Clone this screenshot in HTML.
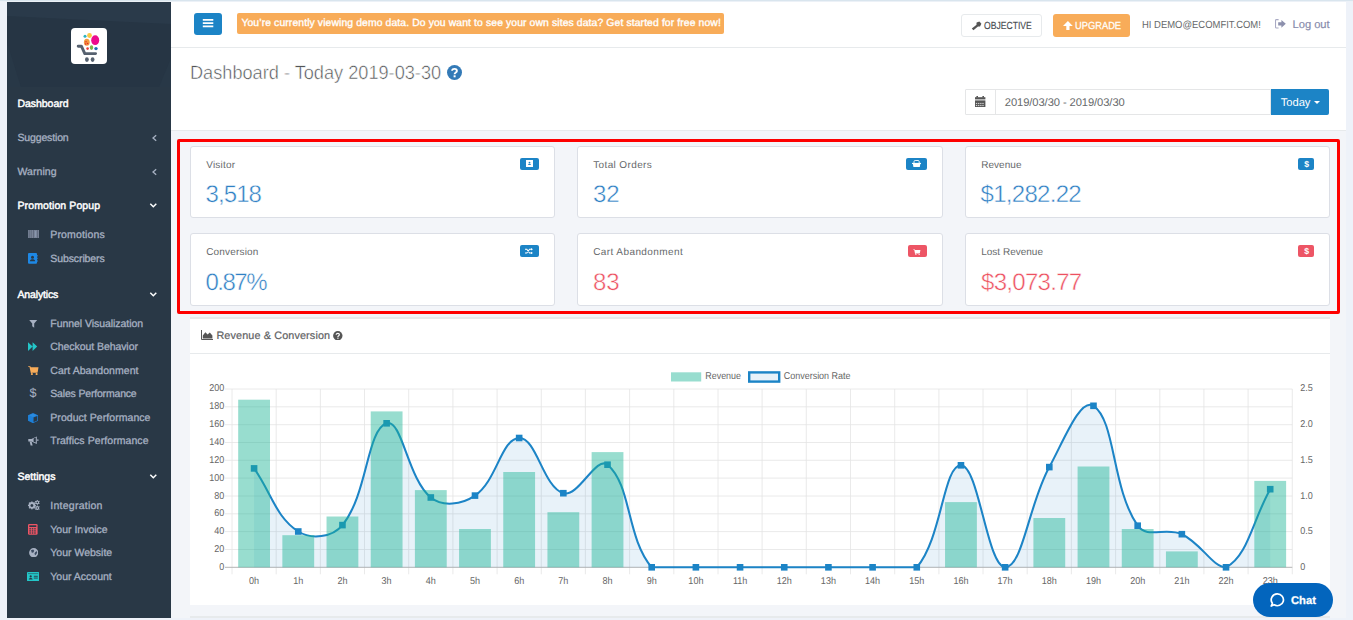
<!DOCTYPE html>
<html>
<head>
<meta charset="utf-8">
<title>Dashboard</title>
<style>
*{box-sizing:border-box;margin:0;padding:0}
html,body{width:1353px;height:620px;overflow:hidden}
body{text-rendering:geometricPrecision;font-family:"Liberation Sans",sans-serif;background:#eef2f9;position:relative;color:#676a6c;font-size:10.5px}
.abs{position:absolute}
#topstrip{left:0;top:0;width:1353px;height:2px;background:linear-gradient(#d9e5ee 0,#d9e5ee 50%,#ecf1f7 50%,#ecf1f7 100%)}
#side{left:7px;top:2px;width:164px;height:616px;background:#293846}
#sidehead{left:0;top:0;width:164px;height:85px;background:#2a3a4a;overflow:hidden}
#logo{left:64px;top:26px;width:36px;height:36px;background:#fff;border-radius:4px}
.nav,.sub{position:absolute;margin-top:1px;white-space:nowrap;font-size:10.5px;color:#a7b1c2;line-height:14px;-webkit-text-stroke:0.3px #a7b1c2}
.nav{left:10.5px}
.sub{left:43.3px}
.nav.on{color:#fff;-webkit-text-stroke:0.45px #fff}
.ico{position:absolute}
.chev{position:absolute;left:143px;width:8px;height:8px}
#main{left:171px;top:2px;width:1175px;height:616px;background:#f3f5f9}
#topbar{left:0;top:0;width:1175px;height:46px;background:#fff;border-bottom:1px solid #e7eaec}
#heading{left:0;top:46px;width:1175px;height:83px;background:#fff;border-bottom:1px solid #e7eaec}
.card{position:absolute;background:#fff;border:1px solid #dcdfe6;border-radius:3px}
.card .lbl{position:absolute;left:15.2px;top:12.1px;font-size:10px;color:#676a6c;white-space:nowrap;line-height:14px}
.card .val{position:absolute;left:14.5px;top:33.7px;font-size:24px;white-space:nowrap;line-height:28px;color:#2f80c4;letter-spacing:-0.9px;-webkit-text-stroke:0.45px #fff}
.card .val.red{color:#ed5060}
.badge{position:absolute;top:11px;height:12px;border-radius:2px;background:#1c84c6}
.badge.red{background:#ed5565}
.ct{text-rendering:geometricPrecision;font-family:"Liberation Sans",sans-serif;font-size:9.9px;fill:#666}
.t{position:absolute;white-space:nowrap}
</style>
</head>
<body>
<div class="abs" id="topstrip"></div>

<!-- SIDEBAR -->
<div class="abs" id="side">
  <div class="abs" id="sidehead">
    <svg class="abs" style="left:0;top:0" width="164" height="85" viewBox="0 0 164 85">
      <polygon points="0,14 60,17 164,22 164,85 0,85" fill="#263544"/>
      <polygon points="0,40 14,85 0,85" fill="#283847"/>
      <polygon points="164,56 152,85 164,85" fill="#283847"/>
    </svg>
    <div class="abs" id="logo">
      <svg width="36" height="36" viewBox="0 0 36 36">
        <circle cx="18.5" cy="7.5" r="2.4" fill="#f6c844"/>
        <circle cx="14" cy="8.3" r="1.5" fill="#2bb3c0"/>
        <ellipse cx="24.2" cy="12.2" rx="4" ry="4.9" fill="#ec0b8c"/>
        <ellipse cx="15.8" cy="14.2" rx="2.9" ry="3.5" fill="#f29a3f"/>
        <circle cx="15" cy="13.8" r="0.75" fill="#e8232a"/><circle cx="16.6" cy="15.6" r="0.75" fill="#e8232a"/><circle cx="14.6" cy="16" r="0.75" fill="#e8232a"/>
        <ellipse cx="20.5" cy="19.6" rx="1.7" ry="2.3" fill="#7ab648"/>
        <circle cx="16.6" cy="20.6" r="1.3" fill="#e9413d"/>
        <circle cx="25" cy="20.6" r="1.7" fill="#1f6fb5"/>
        <path d="M7.2,18.2 H10.4 L13.8,25.6 H24.6" fill="none" stroke="#56616f" stroke-width="2.9" stroke-linecap="round" stroke-linejoin="round"/>
        <ellipse cx="15.9" cy="31.6" rx="1.9" ry="2.3" fill="#56616f"/><ellipse cx="21.6" cy="31.6" rx="1.9" ry="2.3" fill="#56616f"/>
      </svg>
    </div>
  </div>
  <div class="nav on" style="top:94px;letter-spacing:-0.05px">Dashboard</div>
  <div class="nav" style="top:128px;letter-spacing:-0.15px">Suggestion</div>
  <div class="nav" style="top:162px;letter-spacing:0.05px">Warning</div>
  <div class="nav on" style="top:196px;letter-spacing:0.1px">Promotion Popup</div>
  <div class="sub" style="top:225px;letter-spacing:0.15px">Promotions</div>
  <div class="sub" style="top:249px;letter-spacing:-0.1px">Subscribers</div>
  <div class="nav on" style="top:285px;letter-spacing:-0.15px">Analytics</div>
  <div class="sub" style="top:314px;letter-spacing:-0.05px">Funnel Visualization</div>
  <div class="sub" style="top:337px;letter-spacing:-0.07px">Checkout Behavior</div>
  <div class="sub" style="top:361px;letter-spacing:0.04px">Cart Abandonment</div>
  <div class="sub" style="top:384px;letter-spacing:-0.18px">Sales Performance</div>
  <div class="sub" style="top:408px;letter-spacing:0.05px">Product Performance</div>
  <div class="sub" style="top:431px;letter-spacing:0.07px">Traffics Performance</div>
  <div class="nav on" style="top:467px">Settings</div>
  <div class="sub" style="top:496px;letter-spacing:0.25px">Integration</div>
  <div class="sub" style="top:520px">Your Invoice</div>
  <div class="sub" style="top:543px">Your Website</div>
  <div class="sub" style="top:567px;letter-spacing:0px">Your Account</div>
  
</div>

<!-- MAIN -->
<div class="abs" id="main">
  <div class="abs" id="topbar"></div>
  <div class="abs" id="heading"></div>
</div>

<!-- TOPBAR CONTENT (page coords) -->
<div class="abs" style="left:194px;top:13px;width:28px;height:22px;background:#1c84c6;border-radius:3px">
  <svg class="abs" style="left:0;top:0" width="28" height="22" viewBox="0 0 28 22"><path d="M8.8,6.9H19.3M8.8,10.1H19.3M8.8,13.3H19.3" stroke="#fff" stroke-width="1.7"/></svg>
</div>
<div class="abs" style="left:237px;top:13px;width:487px;height:21px;background:#f8ac59;border-radius:2px"></div>
<div class="t" style="left:241.4px;top:16.5px;font-size:10.4px;line-height:14px;color:#fff;letter-spacing:0.103px;-webkit-text-stroke:0.35px #fff">You’re currently viewing demo data. Do you want to see your own sites data? Get started for free now!</div>

<div class="abs" style="left:961px;top:14px;width:81px;height:23px;background:#fff;border:1px solid #e7eaec;border-radius:3px"></div>
<div class="t" style="left:984.2px;top:19.6px;font-size:10.3px;line-height:13px;color:#484c50;-webkit-text-stroke:0.15px #484c50;transform-origin:0 0;transform:scaleX(0.835)">OBJECTIVE</div>
<div class="abs" style="left:1053px;top:14px;width:77px;height:23px;background:#f8ac59;border-radius:3px"></div>
<div class="t" style="left:1074.6px;top:19.6px;font-size:10.3px;line-height:13px;color:#fff;-webkit-text-stroke:0.25px #fff;transform-origin:0 0;transform:scaleX(0.905)">UPGRADE</div>
<div class="t" style="left:1142.3px;top:18.7px;font-size:10.3px;line-height:13px;color:#676a6c;transform-origin:0 0;transform:scaleX(0.918)">HI DEMO@ECOMFIT.COM!</div>
<div class="t" style="left:1292.6px;top:17.9px;font-size:11.2px;line-height:14px;color:#878bab;letter-spacing:-0.05px;-webkit-text-stroke:0.15px #878bab">Log out</div>
<svg class="abs" style="left:970.5px;top:20.5px" width="11" height="10" viewBox="0 0 11 10"><path d="M0.8,7.6 L6.2,3.2 L7.6,5 L2.4,9.2 Z" fill="#555"/><path d="M5.6,1.4 L8.4,0.4 L10.4,2.8 L9,5.4 L7.4,5.6 L5.4,3.2 Z" fill="#555"/></svg>
<svg class="abs" style="left:1062.5px;top:21px" width="10" height="9.4" viewBox="0 0 10 9.4"><path d="M4.9,0 L9.8,4.9 H6.5 V9.2 H3.3 V4.9 H0 Z" fill="#fff"/></svg>
<svg class="abs" style="left:1275px;top:19.4px" width="12" height="10" viewBox="0 0 12 10"><path d="M3.6,0.6 H1.4 Q0.5,0.6 0.5,1.5 V8.1 Q0.5,9 1.4,9 H3.6" fill="none" stroke="#a9aac4" stroke-width="1.1"/><path d="M3.2,3.2 H6.4 V0.9 L10.8,4.8 L6.4,8.7 V6.4 H3.2 Z" fill="#8c90ad"/></svg>
<svg class="abs" style="left:151px;top:134px" width="7" height="8" viewBox="0 0 7 8"><path d="M5.2,1.2 L2,4 L5.2,6.8" fill="none" stroke="#a7b1c2" stroke-width="1.3"/></svg>
<svg class="abs" style="left:151px;top:168px" width="7" height="8" viewBox="0 0 7 8"><path d="M5.2,1.2 L2,4 L5.2,6.8" fill="none" stroke="#a7b1c2" stroke-width="1.3"/></svg>
<svg class="abs" style="left:149px;top:202.4px" width="9" height="7" viewBox="0 0 9 7"><path d="M1.3,1.8 L4.3,4.8 L7.3,1.8" fill="none" stroke="#fff" stroke-width="1.5"/></svg>
<svg class="abs" style="left:149px;top:291.4px" width="9" height="7" viewBox="0 0 9 7"><path d="M1.3,1.8 L4.3,4.8 L7.3,1.8" fill="none" stroke="#fff" stroke-width="1.5"/></svg>
<svg class="abs" style="left:149px;top:473.4px" width="9" height="7" viewBox="0 0 9 7"><path d="M1.3,1.8 L4.3,4.8 L7.3,1.8" fill="none" stroke="#fff" stroke-width="1.5"/></svg>
<svg class="abs" style="left:28px;top:230px" width="11" height="8" viewBox="0 0 11 8"><rect width="11" height="8" fill="#7a8598"/><path d="M1.2,0V8M3.2,0V8M5.5,0V8M9.6,0V8" stroke="#5a6578" stroke-width="0.8"/><path d="M7.6,1.5V6.5" stroke="#9fb0d0" stroke-width="0.9" stroke-dasharray="1,1"/></svg>
<svg class="abs" style="left:28px;top:253px" width="10" height="11" viewBox="0 0 10 11"><rect x="0" y="0" width="9" height="10.8" rx="1" fill="#1e88e5"/><rect x="8.6" y="2" width="1" height="1.6" fill="#1e88e5"/><rect x="8.6" y="4.6" width="1" height="1.6" fill="#1e88e5"/><rect x="8.6" y="7.2" width="1" height="1.6" fill="#1e88e5"/><circle cx="4.5" cy="4.2" r="1.5" fill="#293846"/><path d="M1.9,8.2 C1.9,5.6 7.1,5.6 7.1,8.2 Z" fill="#293846"/></svg>
<svg class="abs" style="left:29px;top:320px" width="9" height="8" viewBox="0 0 9 8"><path d="M0.2,0 H8.2 L5.2,3.5 V7.8 L3.2,6.3 V3.5 Z" fill="#a7b1c2"/></svg>
<svg class="abs" style="left:27.8px;top:341.8px" width="10" height="10" viewBox="0 0 10 10"><path d="M0,0.2 L4.6,4.6 L0,9 Z M4.6,0.2 L9.2,4.6 L4.6,9 Z" fill="#23c6c8"/></svg>
<svg class="abs" style="left:28px;top:366px" width="11" height="9" viewBox="0 0 11 9"><path d="M0.2,0.3 H2.3 L2.8,1.3 H10.5 L9.7,5.9 H3.7 L3.8,6.3 H9.6 V7.1 H2.8 L1.5,1.1 H0.2 Z" fill="#f8ac59"/><circle cx="3.9" cy="8" r="1.05" fill="#f8ac59"/><circle cx="8.6" cy="8" r="1.05" fill="#f8ac59"/></svg>
<div class="t" style="left:29.6px;top:385.6px;font-size:12.6px;line-height:15px;color:#a7b1c2">$</div>
<svg class="abs" style="left:28px;top:412.6px" width="10" height="10.4" viewBox="0 0 10 10.4"><path d="M5,0 L10,2.2 V7.8 L5,10.2 L0,7.8 V2.2 Z" fill="#1e7fd6"/><path d="M5.3,4.6 L9.3,2.9 V7.4 L5.3,9.3 Z" fill="#293846"/><path d="M0.9,2.3 L5,0.7 L9.1,2.3 L5,4 Z" fill="#2a8be0"/><path d="M5,4.2V10" stroke="#1e7fd6" stroke-width="0.7"/></svg>
<svg class="abs" style="left:28px;top:435.6px" width="11" height="10" viewBox="0 0 11 10"><path d="M0.3,3 H3.4 L8.8,0.4 V8 L3.4,5.6 H0.3 Z" fill="#a7b1c2"/><path d="M5.6,2.6 L7.8,1.6 V6.6 L5.6,5.7 Z" fill="#293846"/><path d="M1.6,5.6 H3.6 L4.6,9.4 H2.6 Z" fill="#a7b1c2"/><rect x="9.3" y="3.3" width="1.1" height="1.7" fill="#a7b1c2"/></svg>
<svg class="abs" style="left:27.6px;top:500px" width="12" height="10.4" viewBox="0 0 12 10.4"><circle cx="3.9" cy="5.4" r="2.40" fill="none" stroke="#a7b1c2" stroke-width="1.80"/><rect x="3.30" y="1.40" width="1.2" height="1.4" fill="#a7b1c2" transform="rotate(0.0 3.9 5.4)"/><rect x="3.30" y="1.40" width="1.2" height="1.4" fill="#a7b1c2" transform="rotate(45.0 3.9 5.4)"/><rect x="3.30" y="1.40" width="1.2" height="1.4" fill="#a7b1c2" transform="rotate(90.0 3.9 5.4)"/><rect x="3.30" y="1.40" width="1.2" height="1.4" fill="#a7b1c2" transform="rotate(135.0 3.9 5.4)"/><rect x="3.30" y="1.40" width="1.2" height="1.4" fill="#a7b1c2" transform="rotate(180.0 3.9 5.4)"/><rect x="3.30" y="1.40" width="1.2" height="1.4" fill="#a7b1c2" transform="rotate(225.0 3.9 5.4)"/><rect x="3.30" y="1.40" width="1.2" height="1.4" fill="#a7b1c2" transform="rotate(270.0 3.9 5.4)"/><rect x="3.30" y="1.40" width="1.2" height="1.4" fill="#a7b1c2" transform="rotate(315.0 3.9 5.4)"/><circle cx="9.3" cy="2.4" r="1.35" fill="none" stroke="#a7b1c2" stroke-width="1.10"/><rect x="8.90" y="-0.20" width="0.8" height="1.4" fill="#a7b1c2" transform="rotate(0.0 9.3 2.4)"/><rect x="8.90" y="-0.20" width="0.8" height="1.4" fill="#a7b1c2" transform="rotate(60.0 9.3 2.4)"/><rect x="8.90" y="-0.20" width="0.8" height="1.4" fill="#a7b1c2" transform="rotate(120.0 9.3 2.4)"/><rect x="8.90" y="-0.20" width="0.8" height="1.4" fill="#a7b1c2" transform="rotate(180.0 9.3 2.4)"/><rect x="8.90" y="-0.20" width="0.8" height="1.4" fill="#a7b1c2" transform="rotate(240.0 9.3 2.4)"/><rect x="8.90" y="-0.20" width="0.8" height="1.4" fill="#a7b1c2" transform="rotate(300.0 9.3 2.4)"/><circle cx="9.3" cy="8" r="1.35" fill="none" stroke="#a7b1c2" stroke-width="1.10"/><rect x="8.90" y="5.40" width="0.8" height="1.4" fill="#a7b1c2" transform="rotate(0.0 9.3 8)"/><rect x="8.90" y="5.40" width="0.8" height="1.4" fill="#a7b1c2" transform="rotate(60.0 9.3 8)"/><rect x="8.90" y="5.40" width="0.8" height="1.4" fill="#a7b1c2" transform="rotate(120.0 9.3 8)"/><rect x="8.90" y="5.40" width="0.8" height="1.4" fill="#a7b1c2" transform="rotate(180.0 9.3 8)"/><rect x="8.90" y="5.40" width="0.8" height="1.4" fill="#a7b1c2" transform="rotate(240.0 9.3 8)"/><rect x="8.90" y="5.40" width="0.8" height="1.4" fill="#a7b1c2" transform="rotate(300.0 9.3 8)"/></svg>
<svg class="abs" style="left:28.4px;top:523.8px" width="10" height="11" viewBox="0 0 10 11"><rect width="9.6" height="10.8" rx="1.2" fill="#ed5565"/><rect x="1.3" y="1.3" width="7" height="1.7" fill="#293846"/><rect x="1.4" y="4.2" width="1.5" height="1.2" fill="#293846"/><rect x="3.8" y="4.2" width="1.5" height="1.2" fill="#293846"/><rect x="6.2" y="4.2" width="1.5" height="1.2" fill="#293846"/><rect x="1.4" y="6.3" width="1.5" height="1.2" fill="#293846"/><rect x="3.8" y="6.3" width="1.5" height="1.2" fill="#293846"/><rect x="6.2" y="6.3" width="1.5" height="1.2" fill="#293846"/><rect x="1.4" y="8.4" width="1.5" height="1.2" fill="#293846"/><rect x="3.8" y="8.4" width="1.5" height="1.2" fill="#293846"/><rect x="6.2" y="8.4" width="1.5" height="1.2" fill="#293846"/></svg>
<svg class="abs" style="left:28.8px;top:547.6px" width="9.4" height="9.4" viewBox="0 0 9.4 9.4"><circle cx="4.7" cy="4.7" r="4.6" fill="#a7b1c2"/><path d="M2,2.2 L4.2,1.4 L5.2,2.8 L4.4,4.6 L2.8,4.8 Z M6,4.4 L7.6,3 L8.2,4.8 L6.6,7.2 L5.4,6 Z" fill="#3a4a60"/></svg>
<svg class="abs" style="left:27px;top:571.8px" width="12.2" height="9.4" viewBox="0 0 12.2 9.4"><rect width="12.2" height="9.2" rx="0.8" fill="#23c6c8"/><rect x="1" y="1.2" width="10.2" height="0.9" fill="#293846" opacity="0.55"/><circle cx="3.7" cy="4.4" r="1.1" fill="#293846"/><path d="M1.8,7.4 C1.8,5.4 5.6,5.4 5.6,7.4 Z" fill="#293846"/><rect x="6.8" y="3.8" width="4" height="0.9" fill="#293846"/><rect x="6.8" y="5.6" width="4" height="0.9" fill="#293846"/></svg>

<!-- HEADING -->
<div class="t" style="left:190.2px;top:61.6px;font-size:19.3px;line-height:24px;color:#525557;transform-origin:0 0;transform:scaleX(0.942);-webkit-text-stroke:0.5px #fff">Dashboard - Today 2019-03-30</div>
<svg class="abs" style="left:447px;top:65px" width="15" height="15" viewBox="0 0 15 15"><circle cx="7.5" cy="7.5" r="7.5" fill="#337ab7"/><path d="M5.1,5.7 C5.1,3.2 9.9,3.2 9.9,5.9 C9.9,7.6 7.6,7.4 7.6,9.2" fill="none" stroke="#fff" stroke-width="1.9"/><rect x="6.6" y="10.3" width="2" height="2" fill="#fff"/></svg>

<div class="abs" style="left:965px;top:89px;width:306px;height:26px;background:#fff;border:1px solid #e5e6e7;border-radius:1px 0 0 1px"></div>
<div class="abs" style="left:995px;top:89px;width:1px;height:26px;background:#e5e6e7"></div>
<div class="t" style="left:1004.8px;top:96.3px;font-size:11.2px;line-height:14px;color:#676a6c;letter-spacing:-0.09px">2019/03/30 - 2019/03/30</div>
<div class="abs" style="left:1271px;top:89px;width:58px;height:26px;background:#1c84c6;border-radius:0 2px 2px 0"></div>
<div class="t" style="left:1280.8px;top:96.1px;font-size:11.2px;line-height:14px;color:#fff;letter-spacing:-0.05px">Today</div>
<div class="abs" style="left:1314px;top:101px;width:0;height:0;border-left:3px solid transparent;border-right:3px solid transparent;border-top:3px solid #fff"></div>
<svg class="abs" style="left:975px;top:96px" width="10.6" height="11" viewBox="0 0 10.6 11"><rect x="0" y="1.2" width="10.4" height="2.2" fill="#555"/><rect x="1.4" y="0" width="1.6" height="1.6" fill="#555"/><rect x="7.4" y="0" width="1.6" height="1.6" fill="#555"/><rect x="0" y="4.4" width="10.4" height="6.6" fill="#555"/><rect x="0.90" y="6.90" width="1.3" height="1.15" fill="#fff" opacity="0.75"/><rect x="3.05" y="6.90" width="1.3" height="1.15" fill="#fff" opacity="0.75"/><rect x="5.20" y="6.90" width="1.3" height="1.15" fill="#fff" opacity="0.75"/><rect x="7.35" y="6.90" width="1.3" height="1.15" fill="#fff" opacity="0.75"/><rect x="0.90" y="8.95" width="1.3" height="1.15" fill="#fff" opacity="0.75"/><rect x="3.05" y="8.95" width="1.3" height="1.15" fill="#fff" opacity="0.75"/><rect x="5.20" y="8.95" width="1.3" height="1.15" fill="#fff" opacity="0.75"/><rect x="7.35" y="8.95" width="1.3" height="1.15" fill="#fff" opacity="0.75"/></svg>

<!-- CARDS -->
<div class="abs" id="redbox" style="left:177px;top:139px;width:1163px;height:175px;border:3px solid #fe0000;border-radius:2px"></div>
<div class="card" style="left:190px;top:146px;width:365px;height:72px"><div class="lbl" style="letter-spacing:0.23px">Visitor</div><div class="val">3,518</div></div>
<div class="card" style="left:577px;top:146px;width:366px;height:72px"><div class="lbl" style="letter-spacing:0.38px">Total Orders</div><div class="val" style="letter-spacing:-0.1px;left:15px">32</div></div>
<div class="card" style="left:965px;top:146px;width:365px;height:72px"><div class="lbl" style="letter-spacing:0.04px">Revenue</div><div class="val" style="letter-spacing:-0.7px">$1,282.22</div></div>
<div class="card" style="left:190px;top:233px;width:365px;height:73px"><div class="lbl" style="letter-spacing:0.18px">Conversion</div><div class="val" style="top:34.7px;letter-spacing:-1.5px">0.87%</div></div>
<div class="card" style="left:577px;top:233px;width:366px;height:73px"><div class="lbl" style="letter-spacing:0.41px">Cart Abandonment</div><div class="val red" style="top:34.7px;letter-spacing:-0.1px;left:15px">83</div></div>
<div class="card" style="left:965px;top:233px;width:365px;height:73px"><div class="lbl" style="letter-spacing:0.01px">Lost Revenue</div><div class="val red" style="top:34.7px;letter-spacing:-0.7px;left:15px">$3,073.77</div></div>
<div class="abs" style="left:520px;top:158px;width:19px;height:12px;border-radius:2px;background:#1c84c6"></div>
<svg class="abs" style="left:526px;top:160px" width="7.4" height="7" viewBox="0 0 7.4 7"><rect width="7" height="7" fill="#fff"/><circle cx="3.5" cy="2.7" r="0.9" fill="#1c84c6"/><path d="M1.9,5.1 C1.9,3.6 5.1,3.6 5.1,5.1 Z" fill="#1c84c6"/></svg>
<div class="abs" style="left:906px;top:158px;width:21px;height:12px;border-radius:2px;background:#1c84c6"></div>
<svg class="abs" style="left:911.8px;top:160px" width="9.4" height="7.2" viewBox="0 0 9.4 7.2"><path d="M2,3 V1.6 Q2,0.5 3.1,0.5 H6.1 Q7.2,0.5 7.2,1.6 V3" fill="none" stroke="#fff" stroke-width="0.9"/><rect x="0" y="2.9" width="9.2" height="1.1" fill="#fff"/><path d="M0.9,4 H8.3 L7.8,7 H1.4 Z" fill="#fff"/></svg>
<div class="abs" style="left:1298px;top:158px;width:16px;height:12px;border-radius:2px;background:#1c84c6"></div>
<div class="t" style="left:1304.2px;top:158.2px;font-size:8.6px;line-height:12px;font-weight:bold;color:#fff">$</div>
<div class="abs" style="left:520px;top:245px;width:19px;height:12px;border-radius:2px;background:#1c84c6"></div>
<svg class="abs" style="left:525.4px;top:248px" width="8.2" height="6.4" viewBox="0 0 8.2 6.4"><path d="M0,1.2 H1.8 L4.6,5 H6.4 M0,5 H1.8 L4.6,1.2 H6.4" fill="none" stroke="#fff" stroke-width="1.05"/><path d="M6,0 L8,1.2 L6,2.4 Z M6,3.8 L8,5 L6,6.2 Z" fill="#fff"/></svg>
<div class="abs" style="left:908px;top:245px;width:19px;height:12px;border-radius:2px;background:#ed5565"></div>
<svg class="abs" style="left:913.0px;top:248.6px" width="8.0" height="6.3" viewBox="0 0 8.4 7"><path d="M0,0.4 H1.5 L1.9,1.2 H8 L7.4,4.4 H2.6 L2.8,5 H7.2 V5.5 H2.1 L1.1,0.9 H0 Z" fill="#fff"/><circle cx="3" cy="6.2" r="0.7" fill="#fff"/><circle cx="6.6" cy="6.2" r="0.7" fill="#fff"/></svg>
<div class="abs" style="left:1298px;top:245px;width:16px;height:12px;border-radius:2px;background:#ed5565"></div>
<div class="t" style="left:1304.2px;top:245.2px;font-size:8.6px;line-height:12px;font-weight:bold;color:#fff">$</div>

<!-- CHART PANEL -->
<div class="abs" id="panel" style="left:190px;top:317px;width:1140px;height:288px;background:#fff;border-top:2px solid #e7eaec"></div>
<div class="abs" style="left:190px;top:353px;width:1140px;height:1px;background:#e7eaec"></div>
<div class="abs" style="left:190px;top:616px;width:1140px;height:2px;background:#e7eaec"></div>
<div class="t" style="left:216.4px;top:328.8px;font-size:10.8px;line-height:14px;color:#5e6163;letter-spacing:0.14px;-webkit-text-stroke:0.2px #5e6163">Revenue &amp; Conversion</div>
<svg class="abs" style="left:201px;top:330px" width="12.4" height="10" viewBox="0 0 12.4 10"><path d="M0.5,0 V9.5 H12.4" fill="none" stroke="#555" stroke-width="1"/><path d="M1.8,8.4 V5.6 L4.4,2.2 L6.6,4.6 L8.8,2.6 L11.4,5.4 V8.4 Z" fill="#555"/></svg>
<svg class="abs" style="left:333px;top:330.5px" width="9.6" height="9.6" viewBox="0 0 9.6 9.6"><circle cx="4.8" cy="4.8" r="4.7" fill="#555"/><path d="M3.2,3.7 C3.2,2 6.4,2 6.4,3.8 C6.4,4.9 4.9,4.8 4.9,5.9" fill="none" stroke="#fff" stroke-width="1.2"/><rect x="4.3" y="6.6" width="1.2" height="1.2" fill="#fff"/></svg>
<svg class="abs" style="left:0;top:0" width="1353" height="620" viewBox="0 0 1353 620">
<path d="M225.0,549.5H1292.3 M225.0,531.6H1292.3 M225.0,513.8H1292.3 M225.0,496.0H1292.3 M225.0,478.1H1292.3 M225.0,460.3H1292.3 M225.0,442.5H1292.3 M225.0,424.7H1292.3 M225.0,406.8H1292.3 M225.0,389.0H1292.3 M232.0,389.0V574.3 M276.2,389.0V574.3 M320.4,389.0V574.3 M364.5,389.0V574.3 M408.7,389.0V574.3 M452.9,389.0V574.3 M497.1,389.0V574.3 M541.3,389.0V574.3 M585.4,389.0V574.3 M629.6,389.0V574.3 M673.8,389.0V574.3 M718.0,389.0V574.3 M762.1,389.0V574.3 M806.3,389.0V574.3 M850.5,389.0V574.3 M894.7,389.0V574.3 M938.9,389.0V574.3 M983.0,389.0V574.3 M1027.2,389.0V574.3 M1071.4,389.0V574.3 M1115.6,389.0V574.3 M1159.8,389.0V574.3 M1203.9,389.0V574.3 M1248.1,389.0V574.3 M1292.3,389.0V574.3" stroke="#e5e5e5" stroke-width="0.8" fill="none"/>
<path d="M225.0,567.3H1292.3" stroke="#b5b5b5" stroke-width="1" fill="none"/>
<path d="M254.09,468.40 C271.76,493.64 275.89,517.14 298.27,531.50 C311.24,539.82 332.31,537.52 342.45,525.10 C367.65,494.24 366.75,429.51 386.63,423.30 C402.09,418.47 407.43,478.37 430.81,497.50 C442.78,507.29 461.61,504.61 474.99,495.60 C496.95,480.81 501.26,438.49 519.16,438.00 C536.60,437.53 543.07,487.07 563.34,493.20 C578.42,497.75 596.21,455.21 607.52,464.70 C631.56,484.85 626.38,537.89 651.70,567.30 C661.72,567.30 678.21,567.30 695.88,567.30 C713.55,567.30 722.39,567.30 740.06,567.30 C757.73,567.30 766.57,567.30 784.24,567.30 C801.91,567.30 810.75,567.30 828.42,567.30 C846.09,567.30 854.93,567.30 872.60,567.30 C890.27,567.30 906.73,567.30 916.78,567.30 C942.07,538.10 943.28,465.30 960.96,465.30 C978.63,465.30 987.33,566.94 1005.14,567.30 C1022.67,567.30 1028.40,505.32 1049.31,467.10 C1063.74,440.72 1080.36,397.09 1093.49,405.80 C1115.70,420.53 1111.53,487.71 1137.67,525.70 C1146.88,539.07 1165.98,526.73 1181.85,534.20 C1201.33,543.37 1212.57,567.30 1226.03,567.30 C1247.91,556.16 1252.54,520.44 1270.21,489.20 L1270.21,567.30 L254.09,567.30 Z" fill="rgba(28,132,198,0.1)" stroke="none"/>
<path d="M254.09,468.40 C271.76,493.64 275.89,517.14 298.27,531.50 C311.24,539.82 332.31,537.52 342.45,525.10 C367.65,494.24 366.75,429.51 386.63,423.30 C402.09,418.47 407.43,478.37 430.81,497.50 C442.78,507.29 461.61,504.61 474.99,495.60 C496.95,480.81 501.26,438.49 519.16,438.00 C536.60,437.53 543.07,487.07 563.34,493.20 C578.42,497.75 596.21,455.21 607.52,464.70 C631.56,484.85 626.38,537.89 651.70,567.30 C661.72,567.30 678.21,567.30 695.88,567.30 C713.55,567.30 722.39,567.30 740.06,567.30 C757.73,567.30 766.57,567.30 784.24,567.30 C801.91,567.30 810.75,567.30 828.42,567.30 C846.09,567.30 854.93,567.30 872.60,567.30 C890.27,567.30 906.73,567.30 916.78,567.30 C942.07,538.10 943.28,465.30 960.96,465.30 C978.63,465.30 987.33,566.94 1005.14,567.30 C1022.67,567.30 1028.40,505.32 1049.31,467.10 C1063.74,440.72 1080.36,397.09 1093.49,405.80 C1115.70,420.53 1111.53,487.71 1137.67,525.70 C1146.88,539.07 1165.98,526.73 1181.85,534.20 C1201.33,543.37 1212.57,567.30 1226.03,567.30 C1247.91,556.16 1252.54,520.44 1270.21,489.20" fill="none" stroke="#1c84c6" stroke-width="2.05" stroke-linejoin="round"/>
<rect x="250.79" y="465.10" width="6.6" height="6.6" fill="#1c84c6"/>
<rect x="294.97" y="528.20" width="6.6" height="6.6" fill="#1c84c6"/>
<rect x="339.15" y="521.80" width="6.6" height="6.6" fill="#1c84c6"/>
<rect x="383.33" y="420.00" width="6.6" height="6.6" fill="#1c84c6"/>
<rect x="427.51" y="494.20" width="6.6" height="6.6" fill="#1c84c6"/>
<rect x="471.69" y="492.30" width="6.6" height="6.6" fill="#1c84c6"/>
<rect x="515.86" y="434.70" width="6.6" height="6.6" fill="#1c84c6"/>
<rect x="560.04" y="489.90" width="6.6" height="6.6" fill="#1c84c6"/>
<rect x="604.22" y="461.40" width="6.6" height="6.6" fill="#1c84c6"/>
<rect x="648.40" y="564.00" width="6.6" height="6.6" fill="#1c84c6"/>
<rect x="692.58" y="564.00" width="6.6" height="6.6" fill="#1c84c6"/>
<rect x="736.76" y="564.00" width="6.6" height="6.6" fill="#1c84c6"/>
<rect x="780.94" y="564.00" width="6.6" height="6.6" fill="#1c84c6"/>
<rect x="825.12" y="564.00" width="6.6" height="6.6" fill="#1c84c6"/>
<rect x="869.30" y="564.00" width="6.6" height="6.6" fill="#1c84c6"/>
<rect x="913.48" y="564.00" width="6.6" height="6.6" fill="#1c84c6"/>
<rect x="957.66" y="462.00" width="6.6" height="6.6" fill="#1c84c6"/>
<rect x="1001.84" y="564.00" width="6.6" height="6.6" fill="#1c84c6"/>
<rect x="1046.01" y="463.80" width="6.6" height="6.6" fill="#1c84c6"/>
<rect x="1090.19" y="402.50" width="6.6" height="6.6" fill="#1c84c6"/>
<rect x="1134.37" y="522.40" width="6.6" height="6.6" fill="#1c84c6"/>
<rect x="1178.55" y="530.90" width="6.6" height="6.6" fill="#1c84c6"/>
<rect x="1222.73" y="564.00" width="6.6" height="6.6" fill="#1c84c6"/>
<rect x="1266.91" y="485.90" width="6.6" height="6.6" fill="#1c84c6"/>
<rect x="238.19" y="399.70" width="31.81" height="167.60" fill="rgba(26,179,148,0.45)"/>
<rect x="282.36" y="535.20" width="31.81" height="32.10" fill="rgba(26,179,148,0.45)"/>
<rect x="326.54" y="516.50" width="31.81" height="50.80" fill="rgba(26,179,148,0.45)"/>
<rect x="370.72" y="411.40" width="31.81" height="155.90" fill="rgba(26,179,148,0.45)"/>
<rect x="414.90" y="490.10" width="31.81" height="77.20" fill="rgba(26,179,148,0.45)"/>
<rect x="459.08" y="529.00" width="31.81" height="38.30" fill="rgba(26,179,148,0.45)"/>
<rect x="503.26" y="472.00" width="31.81" height="95.30" fill="rgba(26,179,148,0.45)"/>
<rect x="547.44" y="512.20" width="31.81" height="55.10" fill="rgba(26,179,148,0.45)"/>
<rect x="591.62" y="452.10" width="31.81" height="115.20" fill="rgba(26,179,148,0.45)"/>
<rect x="945.05" y="502.10" width="31.81" height="65.20" fill="rgba(26,179,148,0.45)"/>
<rect x="1033.41" y="518.00" width="31.81" height="49.30" fill="rgba(26,179,148,0.45)"/>
<rect x="1077.59" y="466.50" width="31.81" height="100.80" fill="rgba(26,179,148,0.45)"/>
<rect x="1121.77" y="529.00" width="31.81" height="38.30" fill="rgba(26,179,148,0.45)"/>
<rect x="1165.95" y="551.40" width="31.81" height="15.90" fill="rgba(26,179,148,0.45)"/>
<rect x="1254.31" y="480.90" width="31.81" height="86.40" fill="rgba(26,179,148,0.45)"/>
<text transform="translate(224.3,569.8) scale(0.915,1)" text-anchor="end" class="ct">0</text>
<text transform="translate(224.3,552.0) scale(0.915,1)" text-anchor="end" class="ct">20</text>
<text transform="translate(224.3,534.1) scale(0.915,1)" text-anchor="end" class="ct">40</text>
<text transform="translate(224.3,516.3) scale(0.915,1)" text-anchor="end" class="ct">60</text>
<text transform="translate(224.3,498.5) scale(0.915,1)" text-anchor="end" class="ct">80</text>
<text transform="translate(224.3,480.6) scale(0.915,1)" text-anchor="end" class="ct">100</text>
<text transform="translate(224.3,462.8) scale(0.915,1)" text-anchor="end" class="ct">120</text>
<text transform="translate(224.3,445.0) scale(0.915,1)" text-anchor="end" class="ct">140</text>
<text transform="translate(224.3,427.2) scale(0.915,1)" text-anchor="end" class="ct">160</text>
<text transform="translate(224.3,409.3) scale(0.915,1)" text-anchor="end" class="ct">180</text>
<text transform="translate(224.3,390.6) scale(0.915,1)" text-anchor="end" class="ct">200</text>
<text transform="translate(1300.2,569.8) scale(0.915,1)" class="ct">0</text>
<text transform="translate(1300.2,534.1) scale(0.915,1)" class="ct">0.5</text>
<text transform="translate(1300.2,498.5) scale(0.915,1)" class="ct">1.0</text>
<text transform="translate(1300.2,462.8) scale(0.915,1)" class="ct">1.5</text>
<text transform="translate(1300.2,427.2) scale(0.915,1)" class="ct">2.0</text>
<text transform="translate(1300.2,390.6) scale(0.915,1)" class="ct">2.5</text>
<text transform="translate(254.1,583.5) scale(0.915,1)" text-anchor="middle" class="ct">0h</text>
<text transform="translate(298.3,583.5) scale(0.915,1)" text-anchor="middle" class="ct">1h</text>
<text transform="translate(342.4,583.5) scale(0.915,1)" text-anchor="middle" class="ct">2h</text>
<text transform="translate(386.6,583.5) scale(0.915,1)" text-anchor="middle" class="ct">3h</text>
<text transform="translate(430.8,583.5) scale(0.915,1)" text-anchor="middle" class="ct">4h</text>
<text transform="translate(475.0,583.5) scale(0.915,1)" text-anchor="middle" class="ct">5h</text>
<text transform="translate(519.2,583.5) scale(0.915,1)" text-anchor="middle" class="ct">6h</text>
<text transform="translate(563.3,583.5) scale(0.915,1)" text-anchor="middle" class="ct">7h</text>
<text transform="translate(607.5,583.5) scale(0.915,1)" text-anchor="middle" class="ct">8h</text>
<text transform="translate(651.7,583.5) scale(0.915,1)" text-anchor="middle" class="ct">9h</text>
<text transform="translate(695.9,583.5) scale(0.915,1)" text-anchor="middle" class="ct">10h</text>
<text transform="translate(740.1,583.5) scale(0.915,1)" text-anchor="middle" class="ct">11h</text>
<text transform="translate(784.2,583.5) scale(0.915,1)" text-anchor="middle" class="ct">12h</text>
<text transform="translate(828.4,583.5) scale(0.915,1)" text-anchor="middle" class="ct">13h</text>
<text transform="translate(872.6,583.5) scale(0.915,1)" text-anchor="middle" class="ct">14h</text>
<text transform="translate(916.8,583.5) scale(0.915,1)" text-anchor="middle" class="ct">15h</text>
<text transform="translate(961.0,583.5) scale(0.915,1)" text-anchor="middle" class="ct">16h</text>
<text transform="translate(1005.1,583.5) scale(0.915,1)" text-anchor="middle" class="ct">17h</text>
<text transform="translate(1049.3,583.5) scale(0.915,1)" text-anchor="middle" class="ct">18h</text>
<text transform="translate(1093.5,583.5) scale(0.915,1)" text-anchor="middle" class="ct">19h</text>
<text transform="translate(1137.7,583.5) scale(0.915,1)" text-anchor="middle" class="ct">20h</text>
<text transform="translate(1181.9,583.5) scale(0.915,1)" text-anchor="middle" class="ct">21h</text>
<text transform="translate(1226.0,583.5) scale(0.915,1)" text-anchor="middle" class="ct">22h</text>
<text transform="translate(1270.2,583.5) scale(0.915,1)" text-anchor="middle" class="ct">23h</text>
<rect x="671" y="372.3" width="30.2" height="9.2" fill="rgba(26,179,148,0.45)"/>
<text x="705.3" y="379.2" class="ct" textLength="35.7" lengthAdjust="spacingAndGlyphs">Revenue</text>
<rect x="749.2" y="372.4" width="30" height="9.2" fill="#e8f2f9" stroke="#1c84c6" stroke-width="2.4"/>
<text x="783.7" y="379.2" class="ct" textLength="66.9" lengthAdjust="spacingAndGlyphs">Conversion Rate</text>
</svg>

<!-- CHAT -->
<div class="abs" style="left:1253px;top:583px;width:80px;height:34px;border-radius:17px;background:#0365bd"></div>
<div class="t" style="left:1291px;top:593.8px;font-size:11.2px;line-height:14px;font-weight:bold;color:#fff;letter-spacing:0px;-webkit-text-stroke:0.25px #fff">Chat</div>
<svg class="abs" style="left:1269px;top:592px" width="17" height="17" viewBox="0 0 17 17"><path d="M8.3,1.9 a6.1,5.9 0 1 1 -3.2,10.9 L2.2,14 L3.4,11.3 A5.9,5.9 0 0 1 8.3,1.9 Z" fill="none" stroke="#fff" stroke-width="1.7" stroke-linejoin="round"/></svg>

</body>
</html>
